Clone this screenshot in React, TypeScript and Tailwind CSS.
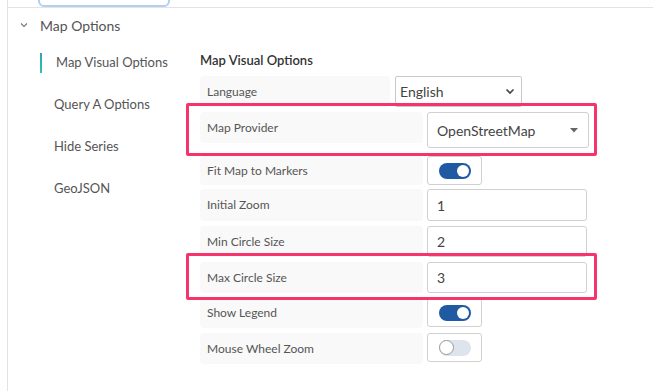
import React from "react";

const font = { fontFamily: "Lato, 'Noto Sans', sans-serif" };

const Label = ({ text, w = "w-[223px]", h = "h-[31px]" }: { text: string; w?: string; h?: string }) => (
  <div className={`${w} ${h} flex items-center rounded-sm bg-[#f9f9f9] pl-[7px] text-[12px] text-[#555]`}>{text}</div>
);

const Toggle = ({ on }: { on: boolean }) => (
  <div className="flex h-[29px] w-[55px] items-center justify-center rounded-[3px] border border-[#d0d0d0] bg-white">
    {on ? (
      <div className="flex h-[16px] w-[32px] items-center justify-end rounded-full bg-[#1f5aa3] pr-[2px]">
        <div className="h-[12px] w-[12px] rounded-full bg-white" />
      </div>
    ) : (
      <div className="flex h-[16px] w-[32px] items-center rounded-full bg-[#dde4ee]">
        <div className="h-[15px] w-[15px] rounded-full border border-[#999] bg-white" />
      </div>
    )}
  </div>
);

const TextInput = ({ value, h = "h-[32px]" }: { value: string; h?: string }) => (
  <div className={`${h} flex w-[160px] items-center rounded-[3px] border border-[#d0d0d0] bg-white pl-[9px] text-[14px] text-[#444]`}>
    {value}
  </div>
);

const sideItems = ["Map Visual Options", "Query A Options", "Hide Series", "GeoJSON"];

export default function App() {
  return (
    <div className="relative h-[391px] w-[653px] overflow-hidden bg-white" style={font}>
      <div className="ml-[7px] h-full border-l border-[#e3e3e3]">
        {/* clipped button from above */}
        <div className="flex h-[7px] items-end overflow-hidden pl-[30px]">
          <div className="h-[20px] w-[132px] shrink-0 rounded-md border-2 border-[#b3cff2]" />
        </div>
        <div className="border-t border-[#e3e3e3]">
          {/* section header */}
          <div className="flex h-[34px] items-center pl-[12px] text-[14px] text-[#555]">
            <svg width="8" height="6" viewBox="0 0 8 6" className="mr-[12px]">
              <path d="M1 1.5 L4 4.5 L7 1.5" fill="none" stroke="#777" strokeWidth="1.1" />
            </svg>
            Map Options
          </div>

          <div className="flex">
            {/* sidebar */}
            <div className="w-[192px] shrink-0 pl-[32px]">
              {sideItems.map((s, i) => (
                <div key={s} className="flex h-[42px] items-center text-[13px] text-[#555]">
                  {i === 0 && <div className="h-[20px] w-[2px] bg-gradient-to-b from-[#2fa5b0] to-[#2cc3b8]" />}
                  <span className="ml-[14px]">{s}</span>
                </div>
              ))}
            </div>

            {/* content */}
            <div className="flex flex-col">
              <div className="mt-[8px] h-[20px] text-[13px] font-semibold leading-[20px] text-[#333]">Map Visual Options</div>

              <div className="mt-[6px] flex h-[31px] gap-[5px]">
                <Label text="Language" w="w-[190px]" />
                <div className="flex h-[31px] w-[127px] items-center justify-between rounded-[2px] border border-[#c8c8c8] bg-white pl-[4px] pr-[6px] text-[14px] text-[#444]">
                  English
                  <svg width="10" height="7" viewBox="0 0 10 7">
                    <path d="M1.5 1.5 L5 5 L8.5 1.5" fill="none" stroke="#444" strokeWidth="1.6" />
                  </svg>
                </div>
              </div>

              <div className="mt-[5px] flex gap-[4px]">
                <Label text="Map Provider" />
                <div className="flex h-[36px] w-[162px] items-center justify-between rounded-[3px] border border-[#d0d0d0] bg-white pl-[9px] pr-[10px] text-[14px] text-[#444]">
                  OpenStreetMap
                  <svg width="8" height="5" viewBox="0 0 8 5">
                    <path d="M0 0 H8 L4 4.5 Z" fill="#666" />
                  </svg>
                </div>
              </div>

              <div className="mt-[8px] flex gap-[4px]">
                <Label text="Fit Map to Markers" h="h-[29px]" />
                <Toggle on />
              </div>

              <div className="mt-[4px] flex gap-[4px]">
                <Label text="Initial Zoom" h="h-[32px]" />
                <TextInput value="1" />
              </div>

              <div className="mt-[5px] flex gap-[4px]">
                <Label text="Min Circle Size" />
                <TextInput value="2" h="h-[31px]" />
              </div>

              <div className="mt-[5px] flex gap-[4px]">
                <Label text="Max Circle Size" />
                <TextInput value="3" h="h-[31px]" />
              </div>

              <div className="mt-[5px] flex gap-[4px]">
                <Label text="Show Legend" h="h-[30px]" />
                <Toggle on />
              </div>

              <div className="mt-[5px] flex gap-[4px]">
                <Label text="Mouse Wheel Zoom" />
                <Toggle on={false} />
              </div>
            </div>
          </div>
        </div>
      </div>

      {/* annotation highlights */}
      <div className="absolute left-[186px] top-[103px] h-[53px] w-[411px] rounded-[2px] border-[3px] border-[#f7336c]" />
      <div className="absolute left-[186px] top-[253px] h-[47px] w-[411px] rounded-[2px] border-[3px] border-[#f7336c]" />
    </div>
  );
}
